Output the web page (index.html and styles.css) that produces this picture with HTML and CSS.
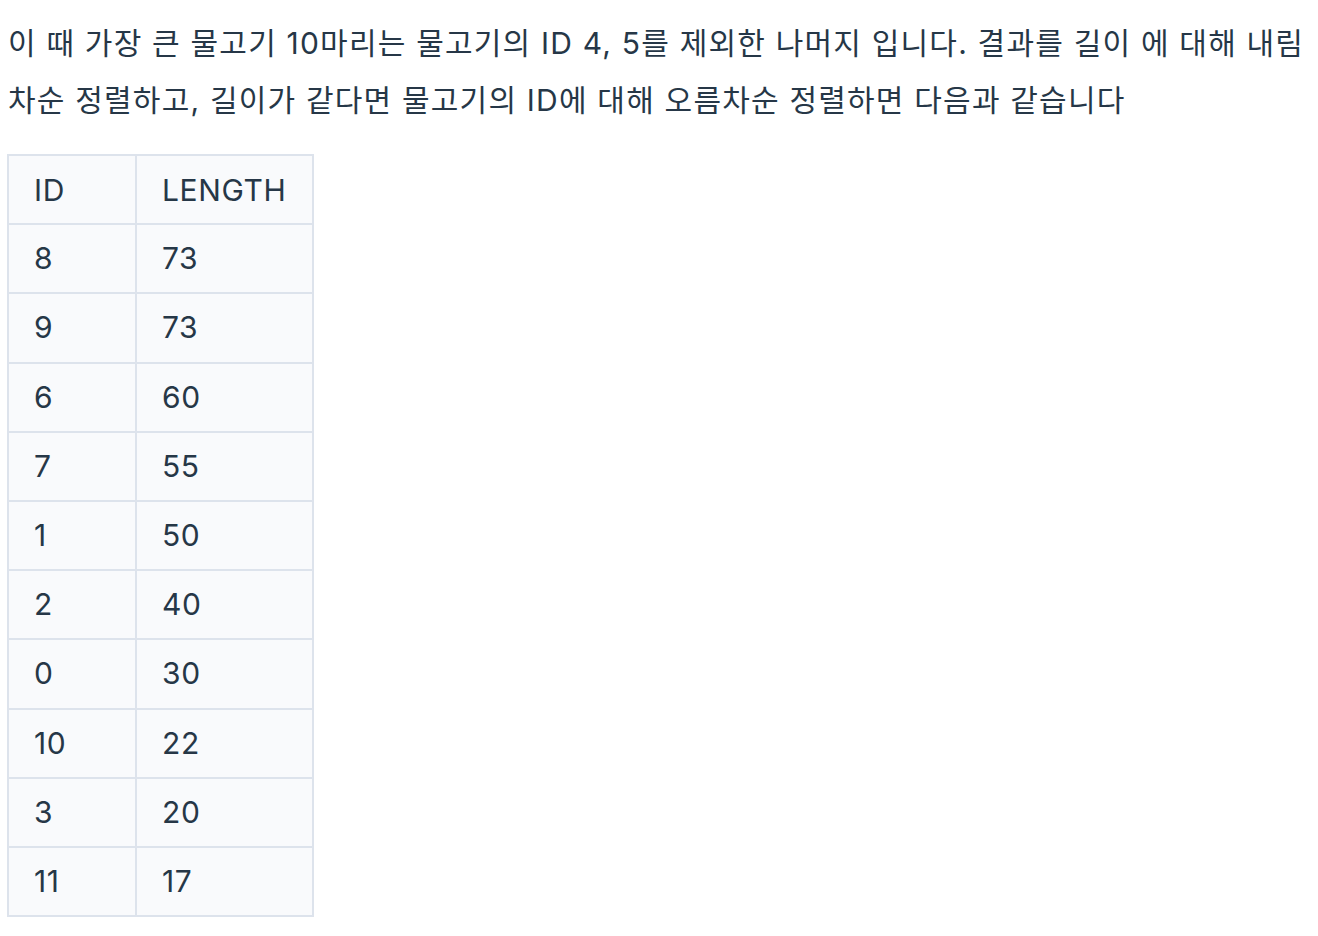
FILE: index.html
```html
<!DOCTYPE html>
<html lang="ko">
<head>
<meta charset="utf-8">
<link rel="stylesheet" href="styles.css">
</head>
<body>
<div class="content">
<p class="desc">이 때 가장 큰 물고기 10마리는 물고기의 ID 4, 5를 제외한 나머지 입니다. 결과를 길이 에 대해 내림차순 정렬하고, 길이가 같다면 물고기의 ID에 대해 오름차순 정렬하면 다음과 같습니다</p>
<table class="result">
<thead><tr><th class="c-id">ID</th><th class="c-len">LENGTH</th></tr></thead>
<tbody>
<tr><td>8</td><td>73</td></tr>
<tr><td>9</td><td>73</td></tr>
<tr><td>6</td><td>60</td></tr>
<tr><td>7</td><td>55</td></tr>
<tr><td>1</td><td>50</td></tr>
<tr><td>2</td><td>40</td></tr>
<tr><td>0</td><td>30</td></tr>
<tr><td>10</td><td>22</td></tr>
<tr><td>3</td><td>20</td></tr>
<tr><td>11</td><td>17</td></tr>
</tbody>
</table>
</div>
</body>
</html>
```
FILE: styles.css
```css
html, body { margin: 0; padding: 0; background: #ffffff; }
body {
  font-family: Inter, "Noto Sans CJK KR", sans-serif;
  color: #263747;
  font-size: 30px;
}
.content { padding: 15px 8px 0 8px; }
.desc {
  margin: 0 0 25px 0;
  line-height: 57px;
  letter-spacing: 1.2px;
  width: 1302px;
}
.result {
  border-collapse: collapse;
  margin-left: -1px;
  background: #f9fafc;
  letter-spacing: 0.6px;
}
.result th, .result td {
  border: 2px solid #dde3ec;
  font-weight: 400;
  text-align: left;
  padding: 14.1px 25px 14.1px 25px;
  line-height: 39px;
  height: 39px;
}
.result th { padding-top: 14.6px; padding-bottom: 13.6px; }
.c-id { width: 76px; }
.c-len { width: 125px; }
```
